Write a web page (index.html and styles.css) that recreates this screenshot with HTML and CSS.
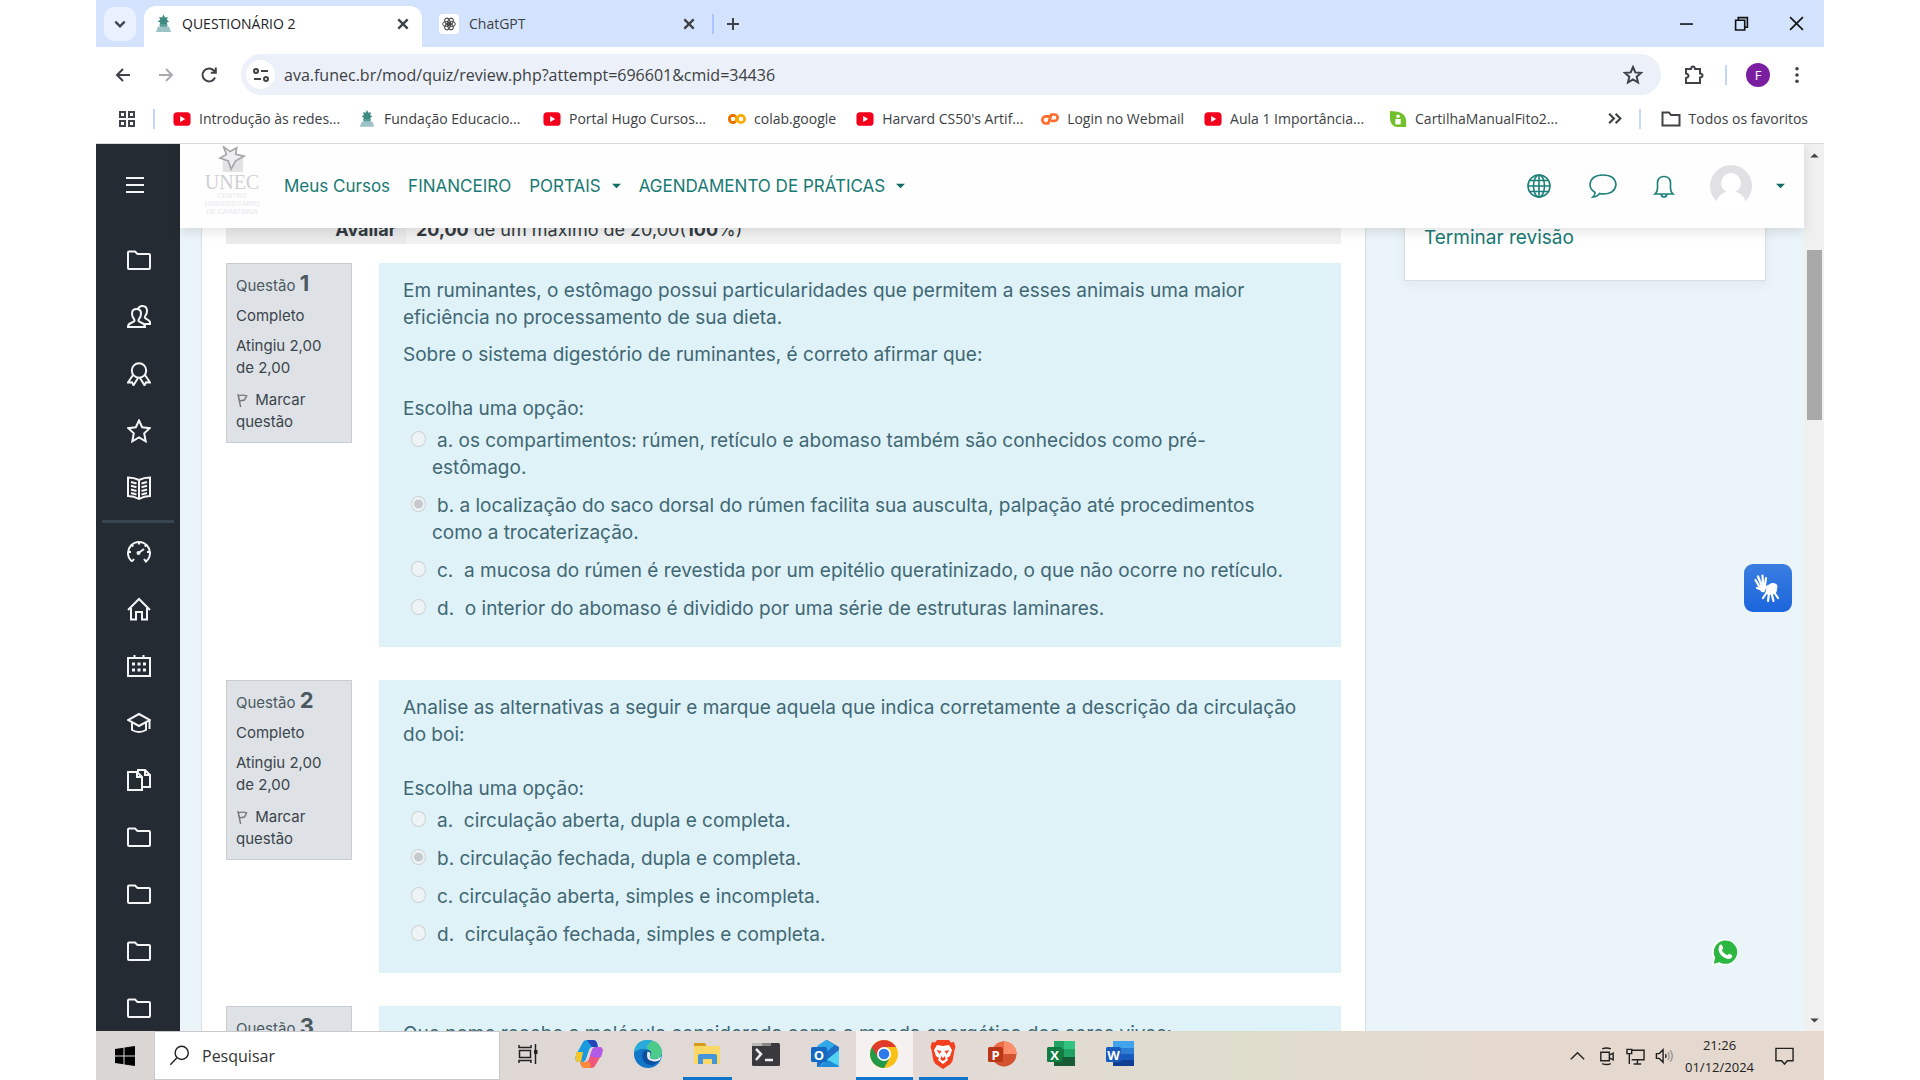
FILE: index.html
```html
<!DOCTYPE html>
<html lang="pt-BR">
<head>
<meta charset="utf-8">
<title>QUESTIONÁRIO 2</title>
<link rel="stylesheet" href="styles.css">
</head>
<body>
<svg class="defs" aria-hidden="true">
  <defs>
    <symbol id="folder" viewBox="0 0 24 24"><path d="M1 20V4.500q0-1 1-1h6l2.500 2.500H22q1 0 1 1v13q0 1-1 1H2q-1 0-1-1z"/></symbol>
    <symbol id="youtube" viewBox="0 0 20 16"><rect x="0.500" y="0.500" width="19" height="15" rx="4" fill="#f4001c"/><path d="M8 4.700v6.600l5.500-3.300z" fill="#fff"/></symbol>
    <symbol id="funec" viewBox="0 0 18 20"><path d="M9 0l1.500 3 3-.5-1 3 2.500 2-2.500 1 .5 3h-8l.5-3L3 7.500l2.500-2-1-3 3 .5z" fill="#3f8a80"/><path d="M3 13h12l2 5.500H1z" fill="#9cc4c6"/><path d="M5 10h8v3H5z" fill="#5b9b98"/></symbol>
    <symbol id="cross" viewBox="0 0 12 12"><path d="M2 2l8 8M10 2l-8 8"/></symbol>
    <symbol id="caret" viewBox="0 0 10 6"><path d="M0 .5h10L5 5.500z"/></symbol>
    <symbol id="flag" viewBox="0 0 14 16"><path d="M2 1l3 14M2.500 3q4-1.500 9 0L9 7.500l-5 1z"/></symbol>
  </defs>
</svg>

<div class="screen">
  <header class="browser">
    <div class="tabs">
      <button class="tab-search" aria-label="Pesquisar guias"><svg viewBox="0 0 12 12"><path d="M2 4l4 4 4-4"/></svg></button>
      <div class="tab active"><svg class="fav"><use href="#funec"/></svg><span>QUESTIONÁRIO 2</span><button aria-label="Fechar guia"><svg><use href="#cross"/></svg></button></div>
      <div class="tab"><svg class="fav gpt" viewBox="0 0 20 20"><rect width="20" height="20" rx="4" fill="#fff"/><g fill="none" stroke="#444" stroke-width="1"><ellipse cx="10" cy="7.300" rx="2.500" ry="3.700" transform="rotate(30 10 10)"/><ellipse cx="10" cy="7.300" rx="2.500" ry="3.700" transform="rotate(90 10 10)"/><ellipse cx="10" cy="7.300" rx="2.500" ry="3.700" transform="rotate(150 10 10)"/><ellipse cx="10" cy="7.300" rx="2.500" ry="3.700" transform="rotate(210 10 10)"/><ellipse cx="10" cy="7.300" rx="2.500" ry="3.700" transform="rotate(270 10 10)"/><ellipse cx="10" cy="7.300" rx="2.500" ry="3.700" transform="rotate(330 10 10)"/></g></svg><span>ChatGPT</span><button aria-label="Fechar guia"><svg><use href="#cross"/></svg></button></div>
      <i class="bar"></i>
      <button class="new-tab" aria-label="Nova guia"><svg viewBox="0 0 14 14"><path d="M7 1v12M1 7h12"/></svg></button>
      <div class="win-buttons">
        <button aria-label="Minimizar"><svg viewBox="0 0 14 14"><path d="M1 7.500h12"/></svg></button>
        <button aria-label="Restaurar"><svg viewBox="0 0 14 14"><path d="M1.500 4h8.500v9H1.500zM4 4V1.500h8.500v9H10"/></svg></button>
        <button aria-label="Fechar"><svg viewBox="0 0 14 14"><path d="M1 1l12 12M13 1L1 13"/></svg></button>
      </div>
    </div>

    <div class="toolbar">
      <button aria-label="Voltar"><svg viewBox="0 0 20 20"><path d="M17 10H4M10 4l-6 6 6 6"/></svg></button>
      <button class="dim" aria-label="Avançar"><svg viewBox="0 0 20 20"><path d="M3 10h13M10 4l6 6-6 6"/></svg></button>
      <button aria-label="Atualizar"><svg viewBox="0 0 20 20"><path d="M16 12.500A6.500 6.500 0 1 1 14.800 5.500L16.500 7.500M16.800 2.500v5.200h-5"/></svg></button>
      <div class="omnibox">
        <span class="site-info"><svg viewBox="0 0 20 20"><circle cx="5" cy="6" r="2"/><path d="M10 6h7M3 14h7"/><circle cx="15" cy="14" r="2"/></svg></span>
        <input type="text" aria-label="Endereço" value="ava.funec.br/mod/quiz/review.php?attempt=696601&amp;cmid=34436">
        <button aria-label="Adicionar aos favoritos"><svg viewBox="0 0 20 20"><path d="M10 2l2.300 5.400 5.700.500-4.300 3.800 1.300 5.800-5-3-5 3 1.300-5.800L2 7.900l5.700-.5z"/></svg></button>
      </div>
      <button class="ext" aria-label="Extensões"><svg viewBox="0 0 20 20"><path d="M2 4h5q.300-2.500 2-2.500T11 4h5v4.500q2.500.200 2.500 2T16 12.500V18H2v-5q2.500-.5 2.500-2.200T2 8.500z"/></svg></button>
      <i class="bar"></i>
      <button class="profile" aria-label="Perfil">F</button>
      <button class="more" aria-label="Menu"><svg viewBox="0 0 6 20"><circle cx="3" cy="3" r="2"/><circle cx="3" cy="10" r="2"/><circle cx="3" cy="17" r="2"/></svg></button>
    </div>

    <nav class="bookmarks" aria-label="Favoritos">
      <button class="apps" aria-label="Apps"><svg viewBox="0 0 18 18"><path d="M2 2h5v5H2zM11 2h5v5h-5zM2 11h5v5H2zM11 11h5v5h-5z"/></svg></button>
      <i class="bar"></i>
      <a class="cut" href="#"><svg><use href="#youtube"/></svg>Introdução às redes...</a>
      <a class="cut" href="#"><svg><use href="#funec"/></svg>Fundação Educacio...</a>
      <a class="cut" href="#"><svg><use href="#youtube"/></svg>Portal Hugo Cursos...</a>
      <a href="#"><svg viewBox="0 0 20 20"><g fill="none" stroke-width="3"><circle cx="5.500" cy="10" r="4" stroke="#f9ab00"/><path d="M8.300 7.200a4 4 0 1 0 0 5.600" stroke="#e8710a"/><circle cx="14.500" cy="10" r="4" stroke="#f9ab00"/></g></svg>colab.google</a>
      <a class="cut" href="#"><svg><use href="#youtube"/></svg>Harvard CS50's Artif...</a>
      <a href="#"><svg viewBox="0 0 20 20"><path d="M9 7H5.500a3.500 3.500 0 0 0 0 8H8L11.500 5H15a3.500 3.500 0 0 1 0 7h-3" fill="none" stroke="#ff6c2c" stroke-width="3" stroke-linejoin="round" stroke-linecap="round"/></svg>Login no Webmail</a>
      <a class="cut" href="#"><svg><use href="#youtube"/></svg>Aula 1 Importância...</a>
      <a class="cut" href="#"><svg viewBox="0 0 20 20"><path d="M1 1l9 1q8 2 9 9v8H9Q1 18 1 8z" fill="#72c02c"/><circle cx="10" cy="7" r="2" fill="#fff"/><path d="M7 10h6v6H7z" fill="#fff"/></svg>CartilhaManualFito2...</a>
      <button class="overflow" aria-label="Mais favoritos"><svg viewBox="0 0 14 14"><path d="M2 2.500L6.500 7 2 11.500M8 2.500L12.500 7 8 11.500"/></svg></button>
      <i class="bar"></i>
      <a class="all" href="#"><svg viewBox="0 0 20 18"><path d="M1.500 15.500v-13H8l2 2.500h8.500v10.500z"/></svg>Todos os favoritos</a>
    </nav>
  </header>

  <div class="viewport">
    <aside class="rail">
      <button class="burger" aria-label="Menu lateral"><svg viewBox="0 0 20 20"><path d="M1 3h18M1 10h18M1 17h18"/></svg></button>
      <nav>
        <a href="#" aria-label="Curso"><svg><use href="#folder"/></svg></a>
        <a href="#" aria-label="Participantes"><svg viewBox="0 0 24 24"><path d="M1 22q0-3 3-4l3-1.500q1-.8 0-2.500-2-2-2-5.500Q5 4 9.500 4T14 8.500q0 3.500-2 5.500-1 1.700 0 2.500l3 1.500q3 1 3 4zM11 4q1-3 4.500-3Q20 1 20 6q0 3-1.800 5.200-.7 1.500.3 2.300l2.500 1.300q2.300 1 2.300 4.200h-5.500"/></svg></a>
        <a href="#" aria-label="Emblemas"><svg viewBox="0 0 24 24"><circle cx="12" cy="8.500" r="7.200"/><path d="M6 13l-5 7.500 4-.3 1.500 3L11 16M18 13l5 7.500-4-.3-1.500 3L13 16"/></svg></a>
        <a href="#" aria-label="Notas"><svg viewBox="0 0 24 24"><path d="M12 1.500l3.200 6.800 7.500.9-5.500 5.100 1.500 8-6.700-3.800-6.700 3.800 1.500-8L1.300 9.200l7.500-.9z"/></svg></a>
        <a href="#" aria-label="Conteúdo"><svg viewBox="0 0 24 24"><path d="M12 4Q7 1.500 1 1.500V20q6 0 11 3 5-3 11-3V1.500Q17 1.500 12 4zM12 4v19M4 6l5.500 1.500M4 9.800l5.500 1.500M4 13.500L9.500 15M4 17l5.500 1.500M20 6l-5.500 1.500M20 9.800l-5.500 1.500M20 13.500L14.500 15M20 17l-5.500 1.500"/></svg></a>
        <hr>
        <a href="#" aria-label="Painel"><svg viewBox="0 0 24 24"><path d="M5 21.500A11 11 0 1 1 19 21.500L17 19M5 21.500L7 19M11.500 13L17 9"/><circle cx="11.500" cy="13" r="1"/><path d="M12 2v2.500M4.800 5l1.500 1.500M1.500 12H4M19.200 5l-1.500 1.500M22.500 12H20"/></svg></a>
        <a href="#" aria-label="Página inicial"><svg viewBox="0 0 24 24"><path d="M1 13L12 2l11 11M4 11v11.500h5V15h6v7.500h5V11"/></svg></a>
        <a href="#" aria-label="Calendário"><svg viewBox="0 0 24 24"><path d="M1 4h22v18H1zM7.500 1v4M16.500 1v4"/><path d="M5 10h3M10.500 10h3M16 10h3M5 16h3M10.500 16h3M16 16h3" stroke-width="3"/></svg></a>
        <a href="#" aria-label="Cursos"><svg viewBox="0 0 24 24"><path d="M12 3L1 9l11 6 11-6zM5 12v7q7 4 14 0v-7M22.500 9.500V18"/></svg></a>
        <a href="#" aria-label="Arquivos"><svg viewBox="0 0 24 24"><path d="M1 4h9l5 5v13H1zM10 4v5h5M11 4V2h7l5 5v12h-7M18 2v5h5"/></svg></a>
        <a href="#" aria-label="Pasta 1"><svg><use href="#folder"/></svg></a>
        <a href="#" aria-label="Pasta 2"><svg><use href="#folder"/></svg></a>
        <a href="#" aria-label="Pasta 3"><svg><use href="#folder"/></svg></a>
        <a href="#" aria-label="Pasta 4"><svg><use href="#folder"/></svg></a>
      </nav>
    </aside>

    <div class="site">
      <header class="site-head">
        <a class="logo" href="#" aria-label="UNEC">
          <svg viewBox="0 0 30 28"><path d="M5 10h22v18H5z" fill="#e3e3e5"/><path d="M6 1l7 5 7-4-1 7 9 2-9 5-5 9-3-9-9-3 7-4z" fill="#eee" stroke="#a6a6aa" stroke-width="1.800"/></svg>
          <b>UNEC</b><span>CENTRO</span><span>UNIVERSITÁRIO</span><span>DE CARATINGA</span>
        </a>
        <nav>
          <a href="#">Meus Cursos</a>
          <a href="#">FINANCEIRO</a>
          <a href="#">PORTAIS<svg><use href="#caret"/></svg></a>
          <a href="#">AGENDAMENTO DE PRÁTICAS<svg><use href="#caret"/></svg></a>
        </nav>
        <div class="user">
          <button aria-label="Idioma"><svg viewBox="0 0 24 24"><circle cx="12" cy="12" r="11"/><ellipse cx="12" cy="12" rx="5.500" ry="11"/><path d="M12 1v22M1 12h22M3 6.500h18M3 17.500h18"/></svg></button>
          <button class="chat" aria-label="Mensagens"><svg viewBox="0 0 28 24"><path d="M6 18.500Q1 15.500 1 10.500 2 1 14 1t13 9.500Q26 20 14 20q-2 0-3.500-.5Q8 23 4 23q2-1.500 2-4.500z"/></svg></button>
          <button aria-label="Notificações"><svg viewBox="0 0 24 24"><path d="M3 20q2.500-2 2.500-6V8.500Q6 2.500 12 2.500t6.500 6V14q0 4 2.500 6zM9 20q.500 3 3 3t3-3"/></svg></button>
          <button class="avatar" aria-label="Conta"><svg viewBox="0 0 42 42"><circle cx="21" cy="21" r="21" fill="#e1e1e3"/><circle cx="21" cy="18" r="10" fill="#fff"/><path d="M5 42q2-13 11-15h10q9 2 11 15z" fill="#fff"/></svg></button>
          <button class="drop" aria-label="Abrir menu"><svg><use href="#caret"/></svg></button>
        </div>
      </header>

      <div class="columns">
        <main>
          <table class="grade"><tbody><tr><th scope="row">Avaliar</th><td><b>20,00</b> de um máximo de 20,00(<b>100</b>%)</td></tr></tbody></table>

          <section class="question">
            <div class="info">
              <h3>Questão <b>1</b></h3><p>Completo</p><p>Atingiu 2,00<br>de 2,00</p>
              <a href="#"><svg><use href="#flag"/></svg> Marcar<br>questão</a>
            </div>
            <div class="body">
              <p>Em ruminantes, o estômago possui particularidades que permitem a esses animais uma maior<br>eficiência no processamento de sua dieta.</p>
              <p>Sobre o sistema digestório de ruminantes, é correto afirmar que:</p>
              <fieldset>
                <legend>Escolha uma opção:</legend>
                <label><input type="radio" name="q1" disabled><span>a. os compartimentos: rúmen, retículo e abomaso também são conhecidos como pré-<br>estômago.</span></label>
                <label><input type="radio" name="q1" disabled checked><span>b. a localização do saco dorsal do rúmen facilita sua ausculta, palpação até procedimentos<br>como a trocaterização.</span></label>
                <label><input type="radio" name="q1" disabled><span>c. &nbsp;a mucosa do rúmen é revestida por um epitélio queratinizado, o que não ocorre no retículo.</span></label>
                <label><input type="radio" name="q1" disabled><span>d. &nbsp;o interior do abomaso é dividido por uma série de estruturas laminares.</span></label>
              </fieldset>
            </div>
          </section>

          <section class="question">
            <div class="info">
              <h3>Questão <b>2</b></h3><p>Completo</p><p>Atingiu 2,00<br>de 2,00</p>
              <a href="#"><svg><use href="#flag"/></svg> Marcar<br>questão</a>
            </div>
            <div class="body">
              <p>Analise as alternativas a seguir e marque aquela que indica corretamente a descrição da circulação<br>do boi:</p>
              <fieldset>
                <legend>Escolha uma opção:</legend>
                <label><input type="radio" name="q2" disabled><span>a. &nbsp;circulação aberta, dupla e completa.</span></label>
                <label><input type="radio" name="q2" disabled checked><span>b. circulação fechada, dupla e completa.</span></label>
                <label><input type="radio" name="q2" disabled><span>c. circulação aberta, simples e incompleta.</span></label>
                <label><input type="radio" name="q2" disabled><span>d. &nbsp;circulação fechada, simples e completa.</span></label>
              </fieldset>
            </div>
          </section>

          <section class="question">
            <div class="info"><h3>Questão <b>3</b></h3></div>
            <div class="body"><p>Que nome recebe a molécula considerada como a moeda energética dos seres vivos:</p></div>
          </section>
        </main>
        <aside class="side"><a href="#">Terminar revisão</a></aside>
      </div>
    </div>

    <div class="scroll" aria-hidden="true"><svg><use href="#caret"/></svg><i></i><svg><use href="#caret"/></svg></div>
    <button class="libras" aria-label="VLibras"><svg viewBox="0 0 32 32"><g fill="none" stroke="#fff" stroke-linecap="round" stroke-width="2.200"><path d="M7 14L3.500 8M9 12L6 4.500M11 12l-.5-8.500M13 13l1-7M8 17l-3-1"/><path d="M22 20l4 6M19.500 21l2 8M17 21l-1 8M15 20l-4 6M20 14l-7 1"/></g><path d="M6.500 13.500l7-2 1 3.500-2 5q-3 1-5-2.500z" fill="#fff"/><path d="M14.500 14l5-3q5-.5 6 3l-1 6-4 3-7-1z" fill="#fff"/></svg></button>
    <button class="whats" aria-label="WhatsApp"><svg viewBox="0 0 32 32"><path d="M2 30l1.500-7A14 14 0 1 1 9 28.500z" fill="#fff"/><path d="M4 28.500L5.500 22A12.500 12.500 0 1 1 10 26.800z" fill="#2cb742"/><path d="M10 9q2-2 3 0l1 2.500q.5 1-1.500 2.500 2 4 6 5.500 1.500-2 2.500-1.500l2.500 1.500q1 .8-.5 2.500-3 3-8.500-.5Q7 16 10 9z" fill="#fff"/></svg></button>
  </div>

  <footer class="taskbar">
    <button class="start" aria-label="Iniciar"><svg viewBox="0 0 20 20"><path d="M0 3l8.500-1.200v7.700H0zM9.500 1.600L20 0v9.500H9.500zM0 10.500h8.500v7.700L0 17zM9.500 10.500H20V20L9.500 18.400z"/></svg></button>
    <label class="search"><svg viewBox="0 0 24 24"><circle cx="14.500" cy="9" r="7.500"/><path d="M9 14.500L1.500 22.500"/></svg><input type="text" placeholder="Pesquisar" aria-label="Pesquisar"></label>
    <div class="apps-row">
      <button aria-label="Visão de tarefas"><svg class="small" viewBox="0 0 22 22"><path d="M2 2v2.500h12V2M2 20v-2.500h12V20M2.500 7.500h11v7h-11zM18.500 1v20" fill="none" stroke="#222" stroke-width="1.500"/><path d="M17 7h3.500v4H17z" fill="#222"/></svg></button>
      <button aria-label="Copilot"><svg viewBox="0 0 30 30"><path d="M9 3q1-2 4-2h6q3 0 4 3l1 4h-5q-3 0-4 3l-3 9q-1 3-4 3H4q-4-1-2-7z" fill="#1a9be0"/><path d="M2 13q2 0 4 0l3 0-2 10H4q-4-1-2-7z" fill="#f4c62c"/><path d="M13 1h6q3 0 4 3l1 4h-6z" fill="#2446b8"/><path d="M21 27q-1 2-4 2h-6q-3 0-4-3l-1-3h5q3 0 4-3l3-9q1-3 4-3h4q4 1 2 7z" fill="#f0567a"/><path d="M18 11q1-3 4-3h4q4 1 2 7l-1 3q-5 2-11-1z" fill="#b25be8"/><path d="M7 26l-1-3h5q2 0 3-1 4 3 2 7h-5q-3 0-4-3z" fill="#fb8b3c"/></svg></button>
      <button aria-label="Edge"><svg viewBox="0 0 30 30"><circle cx="15" cy="15" r="14" fill="#1377c9"/><path d="M1 13Q3 1 15 1q13 1 14 12 0 7-8 7-5 0-4-3 2-3-1-6-7-4-15 2z" fill="#4ccb8a"/><path d="M1 13Q3 1 15 1l4 1q-8 5-3 9-7-4-15 2z" fill="#2aa9dc"/><path d="M9 16q1-5 6-5 4 1 3 4-3 4 2 6 4 1 7-1-4 7-10 6-8-2-8-10z" fill="#0c4fa0"/><path d="M14.500 12.500q4 .5 2.500 4-1 3.500 4 3.800 4 0 7.500-3l-1.500 3.500q-3 2.500-7 1.500-6-1-6-5.500 0-2.500.5-4.300z" fill="#e4ecee"/></svg></button>
      <button class="open" aria-label="Explorador"><svg viewBox="0 0 30 30"><path d="M2 4h11l2 4H2z" fill="#d59b1c"/><path d="M2 7h26v18H2z" fill="#fbd765"/><path d="M6 25v-8q0-2 2-2h15q2 0 2 2v8h-5v-5h-9v5z" fill="#4596d8"/></svg></button>
      <button aria-label="Terminal"><svg viewBox="0 0 30 30"><rect x="1" y="4" width="28" height="23" rx="1.500" fill="#3a3a3c"/><path d="M2 4h9v3H1V5z" fill="#bbb"/><path d="M11 4h9v3h-9z" fill="#888"/><path d="M5 10l5 5-5 6M14 21h8" fill="none" stroke="#eee" stroke-width="2.500"/></svg></button>
      <button aria-label="Outlook"><svg viewBox="0 0 30 30"><path d="M7 8l10-7 12 7v18q0 2-2 2H7z" fill="#1e6fc6"/><path d="M7 7l9-6 9 5-10 8z" fill="#31a8ea"/><path d="M29 11v15q0 2-2 2H8z" fill="#50d4f2"/><path d="M8 28l10-7 11 6q-1 1-2 1z" fill="#1f8ed8"/><rect x="1" y="8" width="16" height="15" rx="1.500" fill="#1269bf"/><text x="9" y="20.500">O</text></svg></button>
      <button class="open current" aria-label="Chrome"><svg viewBox="0 0 30 30"><circle cx="15" cy="15" r="14" fill="#fbc116"/><path d="M15 15L2.900 8A14 14 0 0 0 15 29l6-10.500z" fill="#229a4a"/><path d="M2.900 8A14 14 0 0 1 27.100 8H15v7l-6 3.500z" fill="#e23b2e"/><circle cx="15" cy="15" r="7" fill="#fff"/><circle cx="15" cy="15" r="5.300" fill="#2c7be8"/></svg></button>
      <button class="open" aria-label="Brave"><svg viewBox="0 0 30 30"><path d="M9 1h12l2 2.500 3-.5 1.500 5-1 3-2 11-2 3-7.500 5-7.500-5-2-3-2-11-1-3L4 3l3 .5z" fill="#f3401f"/><path d="M9 6l6 1 6-1 3 5-2 6-3 2 1 2-5 4-5-4 1-2-3-2-2-6z" fill="#fff"/><path d="M8.500 11l5 1-2 3zM21.500 11l-5 1 2 3zM13 17l2 2 2-2 .5 3.500L15 22l-2.500-1.500z" fill="#f3401f"/></svg></button>
      <button aria-label="PowerPoint"><svg viewBox="0 0 30 30"><circle cx="17" cy="15" r="12.500" fill="#d35230"/><path d="M17 2.500A12.500 12.500 0 0 1 29.500 15H17z" fill="#ff8f6b"/><path d="M17 2.500V15H4.500A12.500 12.500 0 0 1 17 2.500z" fill="#ed6c47"/><rect x="1" y="8" width="15" height="15" rx="1.500" fill="#b93718"/><text x="8.500" y="20.500">P</text></svg></button>
      <button aria-label="Excel"><svg viewBox="0 0 30 30"><path d="M8 2h21v25H8z" fill="#21a366"/><path d="M18 2h11v8H18z" fill="#33c481"/><path d="M8 10h10v8H8z" fill="#107c41"/><path d="M8 18h21v9H8z" fill="#185c37"/><rect x="1" y="8" width="15" height="15" rx="1.500" fill="#107c41"/><text x="8.500" y="20.500">X</text></svg></button>
      <button aria-label="Word"><svg viewBox="0 0 30 30"><path d="M8 2h21v7H8z" fill="#41a5ee"/><path d="M8 9h21v6H8z" fill="#2b7cd3"/><path d="M8 15h21v6H8z" fill="#185abd"/><path d="M8 21h21v6H8z" fill="#103f91"/><rect x="1" y="8" width="15" height="15" rx="1.500" fill="#185abd"/><text x="8.500" y="20.500">W</text></svg></button>
    </div>
    <div class="tray">
      <button aria-label="Ícones ocultos"><svg viewBox="0 0 20 20"><path d="M3 13.500l7-7 7 7"/></svg></button>
      <button aria-label="Câmera"><svg viewBox="0 0 20 20"><path d="M4 6h9v9H4zM13 9l4-2v7l-4-2M5.500 2.500q4.500-2 9 0M5.500 18q4.500 2 9 0"/></svg></button>
      <button aria-label="Rede"><svg viewBox="0 0 20 20"><path d="M6 4h13v10H6M12 14v4M8 18.500h8M1 3h5v4.500H1zM3.500 7.500v11"/></svg></button>
      <button aria-label="Volume"><svg viewBox="0 0 20 20"><path d="M1.500 7.500h3l4-4v13l-4-4h-3zM11 8q1.500 2 0 4"/><path d="M13.500 6q3 4 0 8M16 4q4.500 6 0 12" stroke="#999"/></svg></button>
      <time datetime="2024-12-01T21:26">21:26<br>01/12/2024</time>
      <button class="notes" aria-label="Notificações"><svg viewBox="0 0 20 20"><path d="M1 2h18v13h-6l-3 3.500L7 15H1z"/></svg></button>
    </div>
  </footer>
</div>
</body>
</html>
```

FILE: styles.css
```css
* { box-sizing: border-box; }
body { margin: 0; background: #fff; }
button { border: 0; padding: 0; background: none; font: inherit; color: inherit; display: grid; place-items: center; flex: none; }
a { color: inherit; text-decoration: none; }
p, h3 { margin: 0; }
svg { display: block; flex: none; }
.defs { position: absolute; width: 0; height: 0; }

.screen {
  width: 90%;
  height: 100vh;
  margin: 0 auto;
  display: flex;
  flex-direction: column;
  overflow: hidden;
  font-family: "Open Sans", "Noto Sans", sans-serif;
}

/* Browser chrome */
.browser { flex: none; color: #3c4043; border-bottom: 1px solid #d8dadc; }
.browser svg { fill: none; stroke: #3f4246; stroke-width: 2; }
.browser use, .browser .fav { stroke: none; }
.bar { width: 2px; height: 20px; background: #c4d8fa; flex: none; }

.tabs { height: 47px; display: flex; align-items: center; padding: 0 20px 0 8px; background: #d3e3fd; font-size: 14px; }
.tab-search { width: 32px; height: 34px; border-radius: 10px; background: #e9f0fe; }
.tab-search svg { width: 14px; height: 14px; }
.tab { width: 278px; height: 41px; display: flex; align-items: center; gap: 10px; padding: 0 4px 0 17px; }
.tab.active { align-self: flex-end; margin-left: 8px; padding: 0 12px 6px 11px; background: #fff; border-radius: 12px 12px 0 0; color: #202124; }
.tab .fav { width: 17px; height: 20px; stroke: none; }
.tab .gpt { width: 20px; }
.tab span { flex: 1; }
.tab button svg { width: 14px; height: 14px; }
.tab button use { stroke: #3f4246; }
.tabs > .bar { margin-left: 12px; background: #a9c7f8; }
.new-tab { width: 38px; }
.new-tab svg { width: 14px; height: 14px; }
.win-buttons { margin-left: auto; display: flex; gap: 40px; }
.win-buttons svg { width: 15px; height: 15px; stroke: #111; stroke-width: 1.5; }

.toolbar { height: 55px; display: flex; align-items: center; padding: 0 20px 0 16px; font-size: 16px; }
.toolbar > button { width: 22px; margin-right: 21px; }
.toolbar svg { width: 20px; height: 20px; }
.toolbar .dim svg { stroke: #a9acb0; }
.omnibox { flex: 1; height: 41px; display: flex; align-items: center; background: #ebf0f9; border-radius: 21px; padding: 0 18px 0 5px; margin-right: 22px; }
.site-info { width: 29px; height: 29px; display: grid; place-items: center; background: #fff; border-radius: 50%; }
.omnibox input { flex: 1; min-width: 0; border: 0; background: none; font: inherit; color: #3c4043; padding: 0 9px; }
.toolbar > button.ext { margin-right: 20px; }
.toolbar > button.profile { width: 24px; height: 24px; margin: 0 20px 0 19px; border-radius: 50%; background: #7b1fa2; color: #fff; font-size: 13px; }
.toolbar > button.more { width: 14px; margin: 0; }
.more svg { width: 6px; height: 18px; fill: #3f4246; stroke: none; }

.bookmarks { height: 41px; display: flex; align-items: center; padding: 0 16px 8px 22px; font-size: 14px; white-space: nowrap; }
.bookmarks a { display: flex; align-items: center; gap: 8px; margin-right: 20px; flex: none; }
.bookmarks a svg { width: 18px; height: 18px; stroke: none; }
.bookmarks .cut { width: 165px; }
.apps svg { width: 18px; height: 18px; }
.apps + .bar { margin: 0 18px 0 17px; }
.overflow { margin-left: auto; }
.overflow svg { width: 15px; height: 15px; }
.overflow + .bar { margin: 0 20px 0 17px; }
.bookmarks a.all { margin: 0; }
.bookmarks a.all svg { width: 20px; stroke: #3f4246; }

/* Page */
.viewport { position: relative; flex: 1; min-height: 0; display: flex; overflow: hidden; font-family: Inter, "Noto Sans", sans-serif; background: #ebf4f8; }

.rail { width: 84px; flex: none; background: #252b32; }
.rail svg { width: 24px; height: 24px; fill: none; stroke: #f3f5f6; stroke-width: 2; }
.burger { width: 78px; height: 82px; }
.burger svg { width: 20px; height: 20px; }
.rail nav { display: flex; flex-direction: column; padding: 5px 6px 0; }
.rail a { height: 57px; display: grid; place-items: center; padding-left: 2px; }
.rail hr { width: 72px; height: 3px; margin: 4px 0 0; border: 0; background: #36454f; }

.site { flex: 1; min-width: 0; display: flex; flex-direction: column; }
.site-head { position: relative; z-index: 1; flex: none; height: 84px; display: flex; align-items: center; padding: 0 19px 0 22px; background: #fefefe; box-shadow: 0 3px 12px rgba(0, 0, 0, .12); color: #187a73; font-size: 17px; }
.logo { align-self: flex-start; width: 60px; padding-top: 2px; display: flex; flex-direction: column; align-items: center; font: 7px/8px "Liberation Sans", sans-serif; color: #e6e8ea; white-space: nowrap; }
.logo svg { width: 28px; height: 26px; }
.logo b { font: 20px/20px "Liberation Serif", serif; color: #d0d0d4; }
.site-head nav { display: flex; gap: 18px; margin-left: 22px; white-space: nowrap; }
.site-head nav a { display: flex; align-items: center; gap: 11px; }
.site-head nav svg, .drop svg { width: 9px; height: 6px; fill: #0f6e66; }
.user { margin-left: auto; display: flex; align-items: center; }
.user svg { width: 24px; height: 24px; fill: none; stroke: #1a7f78; stroke-width: 1.6; }
.user button { margin-right: 38px; }
.user .chat svg { width: 28px; }
.user .chat { margin-right: 35px; }
.user .avatar { margin: 0 24px 0 -4px; }
.user .avatar svg { width: 42px; height: 42px; stroke: none; }
.user button.drop { margin: 0; }
.user .drop svg { width: 9px; height: 6px; fill: #0f6e66; stroke: none; }

.columns { flex: 1; min-height: 0; display: flex; align-items: flex-start; padding: 0 38px 0 21px; }
main { flex: 1; min-width: 0; margin-top: -16px; padding: 0 24px; background: #fff; border: solid #d8e0e4; border-width: 0 1px; display: flex; flex-direction: column; }
.grade { border-collapse: collapse; width: 100%; height: 32px; margin-bottom: 19px; background: #f2f2f2; color: #333b40; font-size: 18px; }
.grade th { width: 180px; padding: 2px 10px 0; text-align: right; background: #ebebeb; }
.grade td { padding: 2px 10px 0; }

.question { display: grid; grid-template-columns: 126px 1fr; gap: 27px; align-items: start; margin-bottom: 33px; }
.info { min-height: 180px; padding: 8px 9px 6px; background: #dee2e6; border: 1px solid #c8cdd1; color: #3b444b; font-size: 15px; line-height: 22px; }
.info h3 { font-weight: 400; font-size: 15px; line-height: 22px; color: #4b5961; }
.info b { font-size: 22px; }
.info p { margin-top: 8px; }
.info a { display: block; margin-top: 10px; }
.info svg { display: inline-block; width: 13px; height: 15px; fill: none; stroke: #777; stroke-width: 1.5; vertical-align: -3px; margin-right: 2px; }
.body { padding: 14px 24px; background: #def2f8; color: #416773; font-size: 19px; line-height: 27px; white-space: nowrap; overflow: hidden; }
.body p + p { margin-top: 10px; }
fieldset { border: 0; margin: 0; padding: 27px 0 0; }
legend { float: left; width: 100%; padding: 0; margin-bottom: 5px; }
fieldset label { clear: both; display: flex; align-items: flex-start; margin-bottom: 11px; }
fieldset label span { padding-left: 6px; text-indent: 5px; }
fieldset input { flex: none; appearance: none; width: 15px; height: 16px; margin: 4px 0 0 8px; border: 1px solid #cdd2d4; border-radius: 50%; background: #eef4f5; }
fieldset input:checked { background: radial-gradient(circle, #c6cacc 0 4px, #eef4f5 5px); }

.side { width: 362px; height: 69px; flex: none; margin: -16px 0 0 38px; padding: 12px 19px; background: #fff; border: 1px solid #d8e0e4; box-shadow: 0 4px 12px rgba(0, 0, 0, .05); color: #187a73; font-size: 19px; line-height: 26px; }
.scroll { width: 20px; flex: none; display: flex; flex-direction: column; align-items: center; padding: 9px 0 8px; background: #f0f0f0; }
.scroll svg { width: 9px; height: 5px; fill: #444; }
.scroll svg:first-child { transform: rotate(180deg); }
.scroll i { width: 15px; height: 170px; margin: 92px 0 auto; background: #a8a8a8; }
.libras { position: absolute; right: 32px; bottom: 419px; width: 48px; height: 48px; border-radius: 9px; background: linear-gradient(#3a7ee0, #1c66dd); }
.libras svg { width: 32px; height: 32px; }
.whats { position: absolute; right: 84px; bottom: 64px; }
.whats svg { width: 30px; height: 30px; }

/* Taskbar */
.taskbar { flex: none; height: 49px; display: flex; align-items: stretch; background: linear-gradient(90deg, #dad6d3, #e3dad6 50%, #dedccb 66%, #e5d8cf 82%); color: #222; }
.start { width: 58px; }
.start svg { width: 20px; height: 20px; }
.search { width: 20%; display: flex; align-items: center; gap: 12px; padding-left: 14px; background: #fff; border: 1px solid #c9c9c9; }
.search svg { width: 21px; height: 21px; fill: none; stroke: #222; stroke-width: 1.6; }
.search input { flex: 1; min-width: 0; border: 0; padding: 0; font: inherit; font-size: 16px; outline: 0; }
.search input::placeholder { color: #333; opacity: 1; }
.apps-row { display: flex; gap: 10px; margin-left: 2px; }
.apps-row button { width: 49px; border-bottom: 3px solid transparent; }
.apps-row button:first-child { margin: 0 2px; }
.apps-row .open { border-color: #0f75cc; }
.apps-row .current { width: 57px; margin: 0 -4px; background: #f5f1f0; }
.apps-row svg { width: 30px; height: 30px; }
.apps-row .small { width: 22px; height: 22px; }
.apps-row text { font: 700 13px "Open Sans", sans-serif; fill: #fff; text-anchor: middle; }
.tray { margin-left: auto; display: flex; align-items: center; padding-right: 30px; }
.tray button { width: 29px; }
.tray svg { width: 19px; height: 20px; fill: none; stroke: #222; stroke-width: 1.5; }
.tray time { padding: 0 20px 0 6px; text-align: center; font-size: 13px; line-height: 22px; }
.tray .notes { width: 20px; }
```
